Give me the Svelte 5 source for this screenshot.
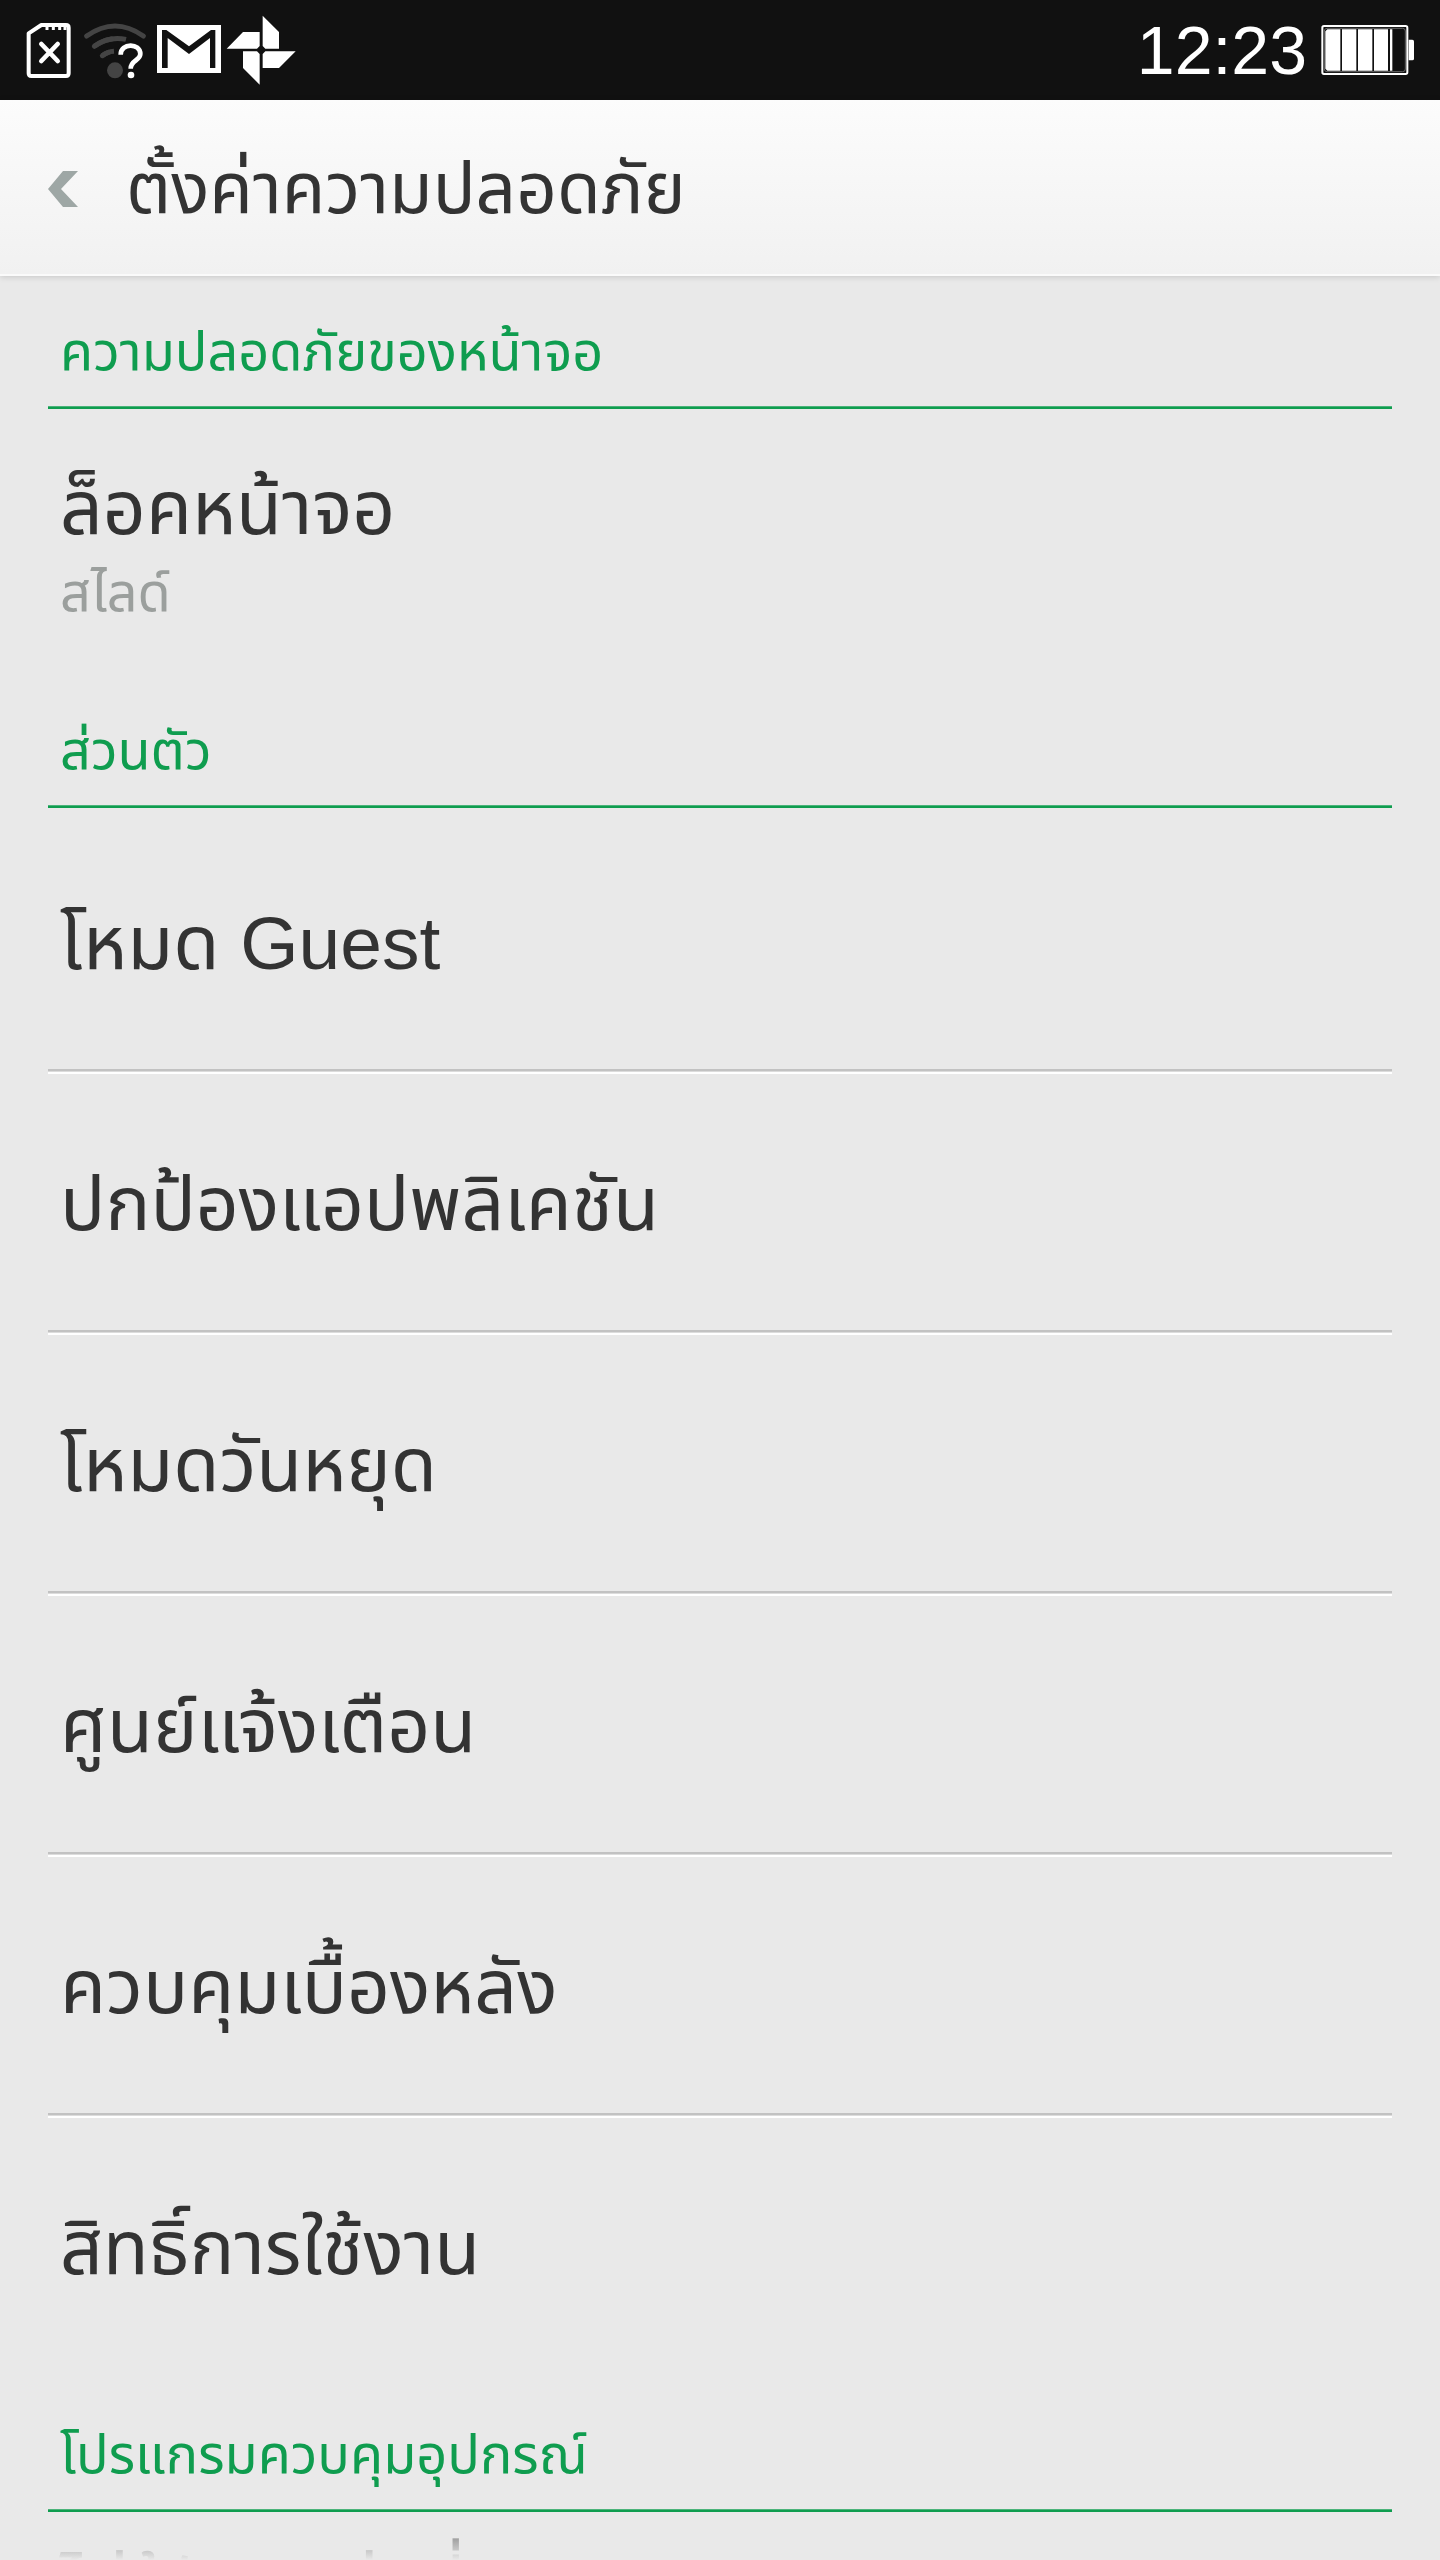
<script lang="ts">
   type Item = { title: string; summary?: string };
   type Section = { heading: string; items: Item[] };

   const time = '12:23';

   const sections: Section[] = [
      {
         heading: 'ความปลอดภัยของหน้าจอ',
         items: [{ title: 'ล็อคหน้าจอ', summary: 'สไลด์' }],
      },
      {
         heading: 'ส่วนตัว',
         items: [
            { title: 'โหมด Guest' },
            { title: 'ปกป้องแอปพลิเคชัน' },
            { title: 'โหมดวันหยุด' },
            { title: 'ศูนย์แจ้งเตือน' },
            { title: 'ควบคุมเบื้องหลัง' },
            { title: 'สิทธิ์การใช้งาน' },
         ],
      },
      {
         heading: 'โปรแกรมควบคุมอุปกรณ์',
         items: [{ title: 'ไม่รู้จักแหล่งที่มา' }],
      },
   ];
</script>

<div class="screen">
   <div class="status">
      <div class="icons">
         <!-- sd card -->
         <svg width="52" height="70" viewBox="72 45 156 210">
            <path
               d="M124 75H198Q206 75 206 83V220Q206 228 198 228H94Q86 228 86 220V100Z"
               fill="none"
               stroke="#fff"
               stroke-width="12"
               stroke-linejoin="round"
            />
            <path d="M141 78V90M160 78V90M179 78V90M195 78V90" stroke="#fff" stroke-width="9" />
            <path d="M124 132L173 183M173 132L124 183" stroke="#fff" stroke-width="14" stroke-linecap="round" />
         </svg>
         <!-- wifi, unknown state -->
         <svg width="70" height="70" viewBox="240 45 210 210">
            <g fill="none" stroke="#444" stroke-width="15" stroke-linecap="round">
               <path d="M260 108Q345 48 430 108" />
               <path d="M283 139Q327 107 378 118" stroke-linecap="butt" />
               <path d="M283 139Q306 121 335 117" />
               <path d="M307 167Q322 155 342 154" stroke-linecap="butt" />
               <path d="M307 167Q316 160 326 157" />
            </g>
            <circle cx="345" cy="211" r="24" fill="#444" />
            <path
               d="M362 164C362 128 421 128 421 162C421 182 392 180 392 206"
               fill="none"
               stroke="#111"
               stroke-width="28"
            />
            <path
               d="M362 164C362 128 421 128 421 162C421 182 392 180 392 206"
               fill="none"
               stroke="#fff"
               stroke-width="14"
            />
            <circle cx="393" cy="225" r="10" fill="#fff" />
         </svg>
         <!-- mail -->
         <svg width="68" height="70" viewBox="462 45 204 210">
            <path d="M471 75H663V219H471Z" fill="#fff" />
            <path d="M486 204V90H499L567 139L633 90H646V204H630V114L567 162L503 114V204Z" fill="#111" />
         </svg>
         <!-- photos -->
         <svg width="70" height="70" viewBox="678 45 210 210">
            <path
               d="M788 47L837 96V146H796L788 138ZM680 146L729 96H779V138L771 146ZM729 154H771L779 162V254L729 204ZM796 154H887L837 204H788V162Z"
               fill="#fff"
            />
         </svg>
      </div>
      <div class="right">
         <time>{time}</time>
         <svg width="94" height="50" viewBox="603 77 282 150">
            <rect x="607" y="80" width="255" height="144" rx="5" fill="#111" stroke="#fff" stroke-width="6" />
            <rect x="613" y="87" width="243" height="130" rx="8" fill="none" stroke="#666" stroke-width="3" />
            <path d="M866 121H877Q882 121 882 126V178Q882 183 877 183H866Z" fill="#fff" />
            <path
               d="M622 90H661V214H622L616 208V96ZM666 90H709V214H666ZM714 90H757V214H714ZM762 90H804V214H762ZM810 90H817V214H810Z"
               fill="#fff"
            />
         </svg>
      </div>
   </div>

   <header>
      <button class="back" aria-label="ย้อนกลับ">
         <svg width="30" height="36" viewBox="0 0 30 36">
            <path d="M15 0H30L13 18L30 36H15L0 18Z" fill="#9ea7a5" />
         </svg>
      </button>
      <h1>ตั้งค่าความปลอดภัย</h1>
   </header>

   <main>
      {#each sections as section}
         <section>
            <h2>{section.heading}</h2>
            <ul>
               {#each section.items as item}
                  <li>
                     <button class="row">
                        <span class="title">{item.title}</span>
                        {#if item.summary}
                           <span class="summary">{item.summary}</span>
                        {/if}
                     </button>
                  </li>
               {/each}
            </ul>
         </section>
      {/each}
   </main>
</div>

<style>
   :global(body) {
      margin: 0;
      background: #e9e9e9;
   }
   .screen {
      position: relative;
      display: flex;
      flex-direction: column;
      height: 100vh;
      overflow: hidden;
      background: #e9e9e9;
      color: #333;
      font-family: 'Liberation Sans', 'Noto Sans Thai', sans-serif;
   }
   /* the list fades out at the bottom edge */
   .screen::after {
      content: '';
      position: absolute;
      left: 0;
      right: 0;
      bottom: 0;
      height: 32px;
      background: linear-gradient(rgba(233, 233, 233, 0.4), #e9e9e9);
      pointer-events: none;
   }
   .status {
      flex: none;
      display: flex;
      justify-content: space-between;
      align-items: center;
      height: 100px;
      padding: 0 25px 0 24px;
      box-sizing: border-box;
      background: #111;
      color: #fff;
   }
   .icons {
      display: flex;
      gap: 4px;
   }
   .right {
      display: flex;
      align-items: center;
      gap: 14px;
   }
   time {
      font-size: 68px;
      line-height: 104px;
   }
   svg {
      display: block;
   }
   header {
      flex: none;
      z-index: 1;
      display: flex;
      align-items: center;
      height: 176px;
      padding-top: 4px;
      box-sizing: border-box;
      background: linear-gradient(#fcfcfc, #f1f1f1);
      border-bottom: 2px solid #fafafa;
      box-shadow: 0 1px 6px rgba(0, 0, 0, 0.15);
   }
   button {
      border: 0;
      background: none;
      color: inherit;
      font-family: inherit;
      text-align: left;
      cursor: pointer;
   }
   .back {
      padding: 24px 48px;
   }
   h1 {
      margin: 0;
      font-size: 71px;
      line-height: 96px;
      font-weight: 400;
   }
   main {
      flex: 1;
      min-height: 0;
      margin-top: -5px;
      padding: 0 48px;
      overflow: hidden;
   }
   h2 {
      height: 138px;
      margin: 0;
      padding: 44px 12px 0;
      box-sizing: border-box;
      border-bottom: 2px solid #0f9d4f;
      box-shadow: inset 0 -1px #4bb37a;
      color: #0f9d4f;
      font-size: 54px;
      line-height: 72px;
      font-weight: 400;
   }
   ul {
      margin: 0;
      padding: 0;
      list-style: none;
   }
   li + li {
      background: linear-gradient(#c2c2c2 2px, #dcdcdc 2px 3px, #fff 3px 5px, transparent 5px) no-repeat;
   }
   .row {
      display: flex;
      flex-direction: column;
      justify-content: center;
      width: 100%;
      height: 261px;
      padding: 8px 12px 0;
   }
   section:last-child .row {
      justify-content: flex-start;
      padding-top: 28px;
   }
   .title {
      font-size: 75px;
      line-height: 96px;
   }
   .summary {
      color: #9b9f9d;
      font-size: 54px;
      line-height: 72px;
   }
</style>
